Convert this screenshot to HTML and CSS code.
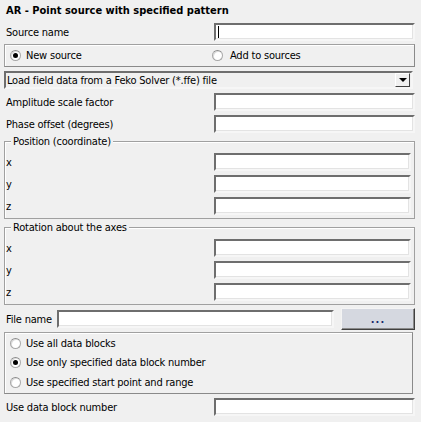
FILE: index.html
```html
<!DOCTYPE html>
<html lang="en">
<head>
  <meta charset="UTF-8">
  <title>Point source with specified pattern</title>
  <link rel="stylesheet" href="styles.css">
</head>
<body>
  <div class="panel">
    <h2 class="title">AR - Point source with specified pattern</h2>

    <div class="row first">
      <label>Source name</label>
      <div class="field"><span class="caret"></span></div>
    </div>

    <div class="box choice">
      <div class="radio-item"><span class="radio on"></span>New source</div>
      <div class="radio-item add"><span class="radio"></span>Add to sources</div>
    </div>

    <div class="combo">
      <span>Load field data from a Feko Solver (*.ffe) file</span>
      <span class="drop"><span class="arrow"></span></span>
    </div>

    <div class="row">
      <label>Amplitude scale factor</label>
      <div class="field"></div>
    </div>
    <div class="row">
      <label>Phase offset (degrees)</label>
      <div class="field"></div>
    </div>

    <div class="group">
      <span class="legend">Position (coordinate)</span>
      <div class="row"><label>x</label><div class="field"></div></div>
      <div class="row"><label>y</label><div class="field"></div></div>
      <div class="row"><label>z</label><div class="field"></div></div>
    </div>

    <div class="group">
      <span class="legend">Rotation about the axes</span>
      <div class="row"><label>x</label><div class="field"></div></div>
      <div class="row"><label>y</label><div class="field"></div></div>
      <div class="row"><label>z</label><div class="field"></div></div>
    </div>

    <div class="file-row">
      <label>File name</label>
      <div class="field wide"></div>
      <div class="btn"><span class="dots">...</span></div>
    </div>

    <div class="box blocks">
      <div class="radio-item"><span class="radio"></span>Use all data blocks</div>
      <div class="radio-item"><span class="radio on"></span>Use only specified data block number</div>
      <div class="radio-item"><span class="radio"></span>Use specified start point and range</div>
    </div>

    <div class="row">
      <label>Use data block number</label>
      <div class="field"></div>
    </div>
  </div>
</body>
</html>
```

FILE: styles.css
```css
body {
  margin: 0;
  background: #f0f0f0;
  font-family: "DejaVu Sans Condensed", "DejaVu Sans", sans-serif;
  font-size: 11px;
  letter-spacing: -0.2px;
  color: #000;
}

.panel {
  width: 411px;
  padding: 0 0 0 4px;
}

.title {
  margin: 0;
  height: 21px;
  line-height: 22px;
  padding-left: 2px;
  font-size: 11px;
  font-weight: bold;
  letter-spacing: 0;
}

.row {
  display: flex;
  align-items: center;
  height: 18px;
  margin-top: 4px;
}

.row.first {
  margin-top: 2px;
}

.row label {
  flex: 1;
  padding-left: 2px;
}

.field {
  width: 197px;
  height: 14px;
  background: #fff;
  border: 2px solid;
  border-color: #6e6e6e #f6f6f6 #f6f6f6 #6e6e6e;
  box-shadow: inset -1px -1px #e3e3e3;
  position: relative;
}

.caret {
  position: absolute;
  left: 2px;
  top: 1px;
  width: 1px;
  height: 12px;
  background: #000;
}

.box {
  border: 1px solid #a0a0a0;
  border-right-color: #8a8a8a;
  border-bottom-color: #8a8a8a;
  box-shadow: inset 1px 1px #fff;
}

.choice {
  margin-top: 3px;
  height: 21px;
  display: flex;
  align-items: center;
}

.choice .add {
  margin-left: 52px;
}

.radio-item {
  display: flex;
  align-items: center;
  padding-left: 5px;
  width: 150px;
  box-sizing: border-box;
  white-space: nowrap;
}

.radio {
  width: 9px;
  height: 9px;
  border-radius: 50%;
  background: #fff;
  border: 1px solid #a8a8a8;
  border-top-color: #8c8c8c;
  margin-right: 5px;
  position: relative;
  box-shadow: inset 1px 1px #dcdcdc;
}

.choice .add .radio {
  margin-right: 7px;
}

.radio.on::after {
  content: "";
  position: absolute;
  left: 2px;
  top: 2px;
  width: 5px;
  height: 5px;
  border-radius: 50%;
  background: #000;
}

.combo {
  margin-top: 4px;
  height: 14px;
  display: flex;
  align-items: center;
  justify-content: space-between;
  border: 2px solid;
  border-color: #6e6e6e #f6f6f6 #f6f6f6 #6e6e6e;
  padding-left: 1px;
  width: 404px;
}

.drop {
  width: 15px;
  height: 14px;
  background: #f0f0f0;
  border: 1px solid;
  border-color: #fff #404040 #404040 #fff;
  box-sizing: border-box;
  display: flex;
  align-items: center;
  justify-content: center;
  margin-right: 1px;
}

.arrow {
  width: 0;
  height: 0;
  border-left: 4px solid transparent;
  border-right: 4px solid transparent;
  border-top: 4px solid #000;
}

.group {
  position: relative;
  margin-top: 8px;
  width: 406px;
  padding: 7px 3px 3px 0;
  border: 1px solid #a0a0a0;
  box-shadow: inset 1px 1px #fff;
}

.group .row label {
  padding-left: 1px;
}

.group .field {
  width: 193px;
}

.legend {
  position: absolute;
  left: 6px;
  top: -7px;
  padding: 0 2px;
  background: #f0f0f0;
  line-height: 13px;
}

.file-row {
  display: flex;
  align-items: center;
  margin-top: 3px;
  height: 22px;
}

.file-row label {
  padding-left: 2px;
  width: 51px;
}

.field.wide {
  width: 273px;
}

.btn {
  margin-left: 7px;
  width: 72px;
  height: 20px;
  background: #d5d8e0;
  border: 1px solid;
  border-color: #f4f4f4 #404040 #404040 #f4f4f4;
  box-shadow: inset -1px -1px #8a8a8a;
  display: flex;
  align-items: center;
  justify-content: center;
}

.dots {
  font-weight: bold;
  letter-spacing: 1px;
  color: #1a2a6a;
}

.blocks {
  margin-top: 2px;
  height: 62px;
  width: 409px;
  display: flex;
  flex-direction: column;
  justify-content: space-around;
  padding: 1px 0;
  box-sizing: border-box;
}

.blocks .radio-item {
  width: auto;
}
```
